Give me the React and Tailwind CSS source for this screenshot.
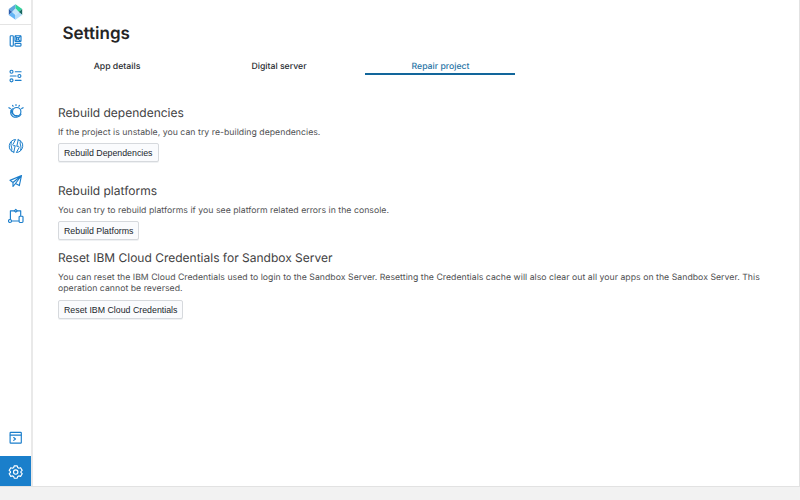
const stroke = {
  fill: "none",
  stroke: "currentColor",
  strokeWidth: 1.15,
  strokeLinecap: "round",
  strokeLinejoin: "round",
};

function Icon({ children }) {
  return (
    <svg width="16" height="16" viewBox="0 0 16 16" {...stroke}>
      {children}
    </svg>
  );
}

function Logo() {
  return (
    <svg width="15" height="16" viewBox="0.6 0 14.8 16" preserveAspectRatio="none">
      <path d="M8 0.3 1.4 5 4.8 8 8 4.6Z" fill="#5fa6df" />
      <path d="M8 0.3 14.6 5 11.2 8 8 4.6Z" fill="#2fd39c" />
      <path d="M1.4 5v6l3.4-3Z" fill="#2f5fae" />
      <path d="M14.6 5v6l-3.4-3Z" fill="#17685f" />
      <path d="M1.4 11 8 15.7V11L4.8 8Z" fill="#62b4f5" />
      <path d="M14.6 11 8 15.7V11l3.2-3Z" fill="#b4defc" />
      <path d="M8 4.6 4.8 8 8 11l3.2-3Z" fill="#c5e6fb" />
    </svg>
  );
}

const items = [
  <Icon key="layout">
    <rect x="2.2" y="2.7" width="3.1" height="10.4" rx="0.8" />
    <rect x="7" y="2.7" width="6" height="5.8" rx="0.8" />
    <path d="m7.4 8.1 1.2-1.2M10.6 6.8l2 1.4M12.5 3.2 10.4 5M7.4 3.2l1.2 1.5" />
    <circle cx="9.6" cy="5.8" r="1.2" />
    <rect x="7" y="10.4" width="6" height="2.7" rx="0.8" />
  </Icon>,
  <Icon key="sliders">
    <circle cx="3.5" cy="3.7" r="1.5" />
    <path d="M7.3 3.7h5.8M2.3 8h5.8M7.3 12.3h5.8" />
    <circle cx="11.4" cy="8" r="1.5" />
    <circle cx="3.5" cy="12.3" r="1.5" />
  </Icon>,
  <Icon key="watson">
    <circle cx="8.7" cy="8.7" r="4.2" />
    <path d="M4.4 5.8C2 7.7 2 11.6 4.8 13.4c2.8 1.6 6.8.6 8.2-2.2" />
    <path d="M3.2 7.4c.2 2.6 2.6 5.4 5.8 5.5" />
    <path d="M8 1.6v.9M4.6 2.4l.5.9M11.4 2.4l-.5.9M.9 4.7l1.4.9M15.1 4.7l-1.4.9" />
  </Icon>,
  <Icon key="analytics">
    <g strokeWidth="1">
      <path d="M5.8 14.2C2.6 13.6 1 10.8 1.3 7.6 1.7 4 4.3 1.7 7.6 1.5L4.9 6.4c-.3.8.2 1.3.9 1.3h1.4l-1.4 6.5Z" />
      <path d="M10.2 1.8c3.2.6 4.8 3.4 4.5 6.6-.4 3.6-3 5.9-6.3 6.1l2.7-4.9c.3-.8-.2-1.3-.9-1.3H8.8l1.4-6.5Z" />
      <path d="M3.4 3.8C2.8 6 3 7.6 3.5 9s.5 2.6.1 3.8M12.6 12.2c.6-2.2.4-3.8-.1-5.2s-.5-2.6-.1-3.8" />
    </g>
  </Icon>,
  <Icon key="send">
    <path d="M13.5 2.5 2 7.4l3 2.1 8.5-7-6 8 3.8 2.1ZM5 9.5v4l2.5-3" />
  </Icon>,
  <Icon key="flow">
    <path d="M2.4 11.2V2.8h4M9.3 2.8h3.4v4.6M3.8 13h6.8" />
    <path d="m7.8 1.4 1.4 1.4-1.4 1.4-1.4-1.4Z" />
    <circle cx="2" cy="13" r="1.5" />
    <rect x="11.1" y="8.2" width="3.9" height="6.3" rx="0.9" />
  </Icon>,
];

function Section({ title, text, button, className }) {
  return (
    <section className={className}>
      <h2 className="text-[12px] leading-[16px] text-[#3f4142]">{title}</h2>
      <p className="mt-[7px] text-[8.7px] leading-[11.5px] tracking-[0.035px] text-[#4f5052]">
        {text}
      </p>
      <button className="mt-[4px] flex h-[19px] items-center rounded-[2px] border border-[#d6d9dd] bg-[#fafbfd] px-[5px] pt-px font-['Liberation_Sans',sans-serif] text-[8.8px] leading-[16px] whitespace-nowrap text-[#20262c] shadow-[0_1px_0_#eff1f3]">
        {button}
      </button>
    </section>
  );
}

export default function App() {
  return (
    <div className="flex h-[500px] w-[800px] flex-col overflow-hidden bg-[#f2f2f2] font-['Inter',sans-serif] [text-rendering:geometricPrecision]">
      <div className="flex h-[487px] border-r border-b border-[#e2e2e2] bg-white">
        <aside className="flex w-[33px] shrink-0 flex-col border-r-2 border-[#e9e9e9] text-[#1b7ecb]">
          <div className="flex h-[25px] w-full justify-center border-b border-[#e4e4e4] pt-[4px]">
            <Logo />
          </div>
          <nav className="mt-[8px] flex flex-col items-center gap-[19px]">
            {items}
          </nav>
          <div className="mt-auto flex flex-col items-center">
            <Icon>
              <rect x="2.1" y="2.3" width="11.2" height="10.8" rx="0.6" />
              <path d="M2.3 5.1h10.8M5.7 7.5l1.8 1.5-1.8 1.4" />
            </Icon>
          </div>
          <div className="mt-[10px] flex h-[30px] w-[31px] items-center justify-center bg-[#1a7fcb] pt-px text-white">
            <Icon>
              <circle cx="7.7" cy="8" r="2.2" />
              <path d="m6.2 1.8-.5 1.7-1.1.7-1.8-.5-1.6 2.7 1.3 1.2v.9l-1.3 1.2 1.6 2.7 1.8-.5 1.1.7.5 1.6h3l.5-1.6 1.1-.7 1.8.5 1.6-2.7-1.3-1.2v-.9l1.3-1.2-1.6-2.7-1.8.5-1.1-.7-.5-1.7Z" />
            </Icon>
          </div>
        </aside>
        <main className="flex-1 pl-[25px]">
          <h1 className="mt-[23px] pl-[4.5px] text-[17px] leading-[23px] font-semibold text-[#252525]">
            Settings
          </h1>
          <div className="ml-[-17px] flex gap-[12px] pt-[9px] text-[8.7px] leading-[25px] font-medium text-[#272b30]">
            <div className="h-[20px] w-[150px] pl-[2px] text-center">
              App details
            </div>
            <div className="h-[20px] w-[150px] pl-[2px] text-center">
              Digital server
            </div>
            <div className="h-[20px] w-[150px] border-b-2 border-[#12669b] pl-px text-center text-[#2874a6]">
              Repair project
            </div>
          </div>
          <Section
            className="mt-[29.5px]"
            title="Rebuild dependencies"
            text="If the project is unstable, you can try re-building dependencies."
            button="Rebuild Dependencies"
          />
          <Section
            className="mt-[20.5px]"
            title="Rebuild platforms"
            text="You can try to rebuild platforms if you see platform related errors in the console."
            button="Rebuild Platforms"
          />
          <Section
            className="mt-[9.5px]"
            title="Reset IBM Cloud Credentials for Sandbox Server"
            text={
              <>
                You can reset the IBM Cloud Credentials used to login to the
                Sandbox Server. Resetting the Credentials cache will also clear
                out all your apps on the Sandbox Server. This
                <br />
                operation cannot be reversed.
              </>
            }
            button="Reset IBM Cloud Credentials"
          />
        </main>
      </div>
    </div>
  );
}
